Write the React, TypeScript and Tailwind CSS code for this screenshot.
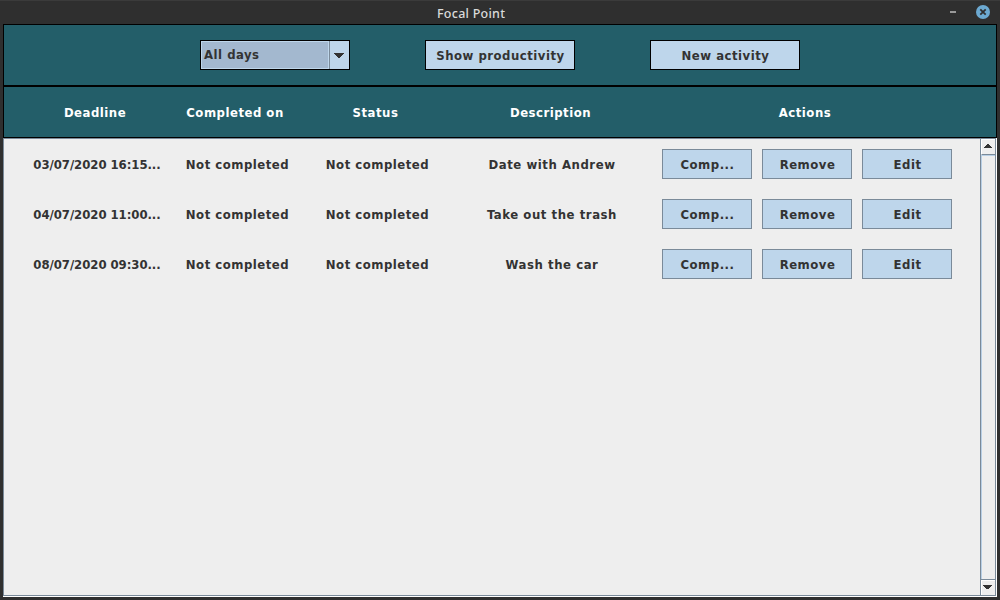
import type { ReactNode } from "react";

const activities = [
  { deadline: "03/07/2020 16:15...", completedOn: "Not completed", status: "Not completed", description: "Date with Andrew" },
  { deadline: "04/07/2020 11:00...", completedOn: "Not completed", status: "Not completed", description: "Take out the trash" },
  { deadline: "08/07/2020 09:30...", completedOn: "Not completed", status: "Not completed", description: "Wash the car" },
];

function TitleBar() {
  return (
    <header className="flex h-6 shrink-0 items-center border-t border-[#3b3b3b] bg-[#2f2f2f] pr-[10px] pb-px pl-[437px] font-['Noto_Sans','Open_Sans',sans-serif] text-[12.5px] font-medium tracking-[0.25px] text-[#dadada]">
      <h1 className="flex-1 pt-[3px] leading-4 whitespace-pre">Focal Point</h1>
      <button aria-label="Minimize" className="mr-5 h-[2px] w-[6px] bg-[#9a9a9a]" />
      <button aria-label="Close" className="h-[14px] w-[14px]">
        <svg viewBox="0 0 14 14" className="block h-[14px] w-[14px]">
          <circle cx="7" cy="7" r="7" fill="#6ca9d1" />
          <path d="M4.3 4.3l5.4 5.4M9.7 4.3l-5.4 5.4" stroke="#2f2f2f" strokeWidth="1.8" />
        </svg>
      </button>
    </header>
  );
}

function ToolbarButton({ children }: { children: ReactNode }) {
  return (
    <button className="flex h-[30px] w-[150px] items-center justify-center border border-black bg-[#bed6eb] pt-[2px] pl-px">
      {children}
    </button>
  );
}

function RowButton({ children }: { children: ReactNode }) {
  return (
    <button className="flex h-[30px] w-[90px] items-center justify-center border border-[#7a8a99] bg-[#bed6eb] pt-[2px] pl-px">
      {children}
    </button>
  );
}

function ScrollBar() {
  return (
    <div className="flex w-[15px] shrink-0 flex-col border-l border-[#7a8a99]">
      <div className="flex h-4 shrink-0 items-center border-t border-b border-l border-t-white border-b-[#7a8a99] border-l-white pb-[2px] pl-[2px]">
        <svg viewBox="0 0 8 4" className="h-1 w-2" shapeRendering="crispEdges">
          <path d="M3 0h2v1h1v1h1v1h1v1H0V3h1V2h1V1h1z" fill="#333" />
        </svg>
      </div>
      <div className="flex-1 border-t border-l border-[#b8cfe5]" />
      <div className="flex h-4 shrink-0 flex-col border-t border-[#7a8a99]">
        <div className="flex flex-1 items-center border-t border-l border-white pb-[2px] pl-px">
          <svg viewBox="0 0 9 4" className="h-1 w-[9px]" shapeRendering="crispEdges">
            <path d="M0 0h9v1H8v1H7v1H6v1H3V3H2V2H1V1H0z" fill="#333" />
          </svg>
        </div>
      </div>
    </div>
  );
}

export default function App() {
  return (
    <div className="flex h-[600px] w-[1000px] flex-col overflow-hidden bg-[#2f2f2f] font-['DejaVu_Sans_Condensed','DejaVu_Sans',sans-serif] text-[13px] leading-4 font-bold tracking-[0.5px] whitespace-nowrap text-[#333]">
      <TitleBar />
      <main className="mr-[3px] mb-[3px] ml-[3px] flex min-h-0 flex-1 flex-col">
        <nav className="flex h-[62px] shrink-0 items-center justify-center gap-[75px] border border-black bg-[#235e69]">
          <div className="flex h-[30px] w-[150px] border border-black bg-[#bed6eb]">
            <div className="m-px flex flex-1 items-center bg-[#a3b8cf] pb-px pl-[2px]">All days</div>
            <div className="flex w-5 items-center border-l border-[#7a8a99] pl-1">
              <svg viewBox="0 0 10 5" className="h-[5px] w-[10px]" shapeRendering="crispEdges">
                <path d="M0 0h10v1H9v1H8v1H7v1H6v1H4V4H3V3H2V2H1V1H0z" fill="#333" />
              </svg>
            </div>
          </div>
          <ToolbarButton>Show productivity</ToolbarButton>
          <ToolbarButton>New activity</ToolbarButton>
        </nav>
        <div className="grid h-[52px] shrink-0 grid-cols-[140px_140px_140px_210px_300px] items-center border border-black bg-[#235e69] pt-[2px] pl-[21px] text-center text-white">
          <div>Deadline</div>
          <div>Completed on</div>
          <div className="pl-px">Status</div>
          <div className="pl-px">Description</div>
          <div>Actions</div>
        </div>
        <section className="flex min-h-0 flex-1 border-r border-b border-white">
          <div className="flex flex-1 border border-[#7a8a99] bg-[#eee]">
            <div className="flex flex-1 flex-col gap-5 pt-[10px]">
              {activities.map((item) => (
                <div key={item.deadline} className="grid h-[30px] grid-cols-[130px_150px_130px_220px_300px] items-center pl-[28px] text-center">
                  <div className="pt-[2px] tracking-[-0.05px]">{item.deadline}</div>
                  <div className="pt-[2px] pl-px">{item.completedOn}</div>
                  <div className="pt-[2px] pl-px">{item.status}</div>
                  <div className="pt-[2px] tracking-[0.55px]">{item.description}</div>
                  <div className="flex gap-[10px]">
                    <RowButton>Comp...</RowButton>
                    <RowButton>Remove</RowButton>
                    <RowButton>Edit</RowButton>
                  </div>
                </div>
              ))}
            </div>
            <ScrollBar />
          </div>
        </section>
      </main>
    </div>
  );
}
